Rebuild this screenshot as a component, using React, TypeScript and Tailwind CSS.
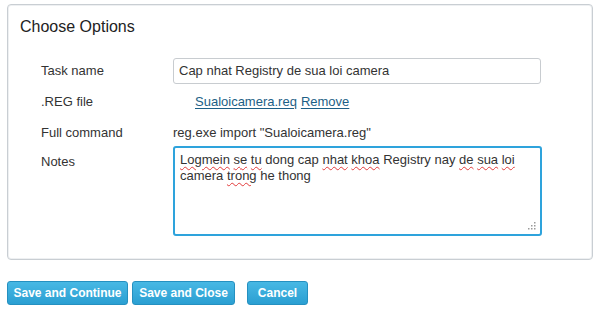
import React from "react";

const squiggle = "underline decoration-wavy decoration-[#e23b3b] decoration-1 underline-offset-2";

export default function App() {
  const notes: [string, boolean][] = [
    ["Logmein", true], [" ", false], ["se", true], [" ", false], ["tu", true],
    [" dong cap ", false], ["nhat", true], [" ", false], ["khoa", true],
    [" Registry nay ", false], ["de", true], [" ", false], ["sua", true], [" ", false], ["loi", true],
    [" camera ", false], ["trong", true], [" he thong", false],
  ];

  return (
    <div className="w-[600px] h-[318px] bg-white pt-[4px] px-[7px] font-['Liberation_Sans',Arial,sans-serif] text-[13px] text-[#333]">
      <div className="h-[256px] border border-[#c9ced3] rounded-[4px] shadow-[inset_0_0_0_1px_#eef0f2] pl-[12px] pr-[12px] pt-[12px]">
        <div className="text-[16px] text-[#222] leading-[20px]">Choose Options</div>

        <div className="mt-[21px] pl-[21px] flex flex-col">
          <div className="flex items-center h-[26px]">
            <div className="w-[132px]">Task name</div>
            <div className="w-[368px] h-[26px] border border-[#c8ccd0] rounded-[3px] flex items-center px-[5px]">
              Cap nhat Registry de sua loi camera
            </div>
          </div>

          <div className="flex items-center h-[19px] mt-[8px]">
            <div className="w-[132px]">.REG file</div>
            <div className="pl-[22px] flex gap-[4px] text-[#1d5f86] underline underline-offset-2">
              <span>Sualoicamera.req</span>
              <span>Remove</span>
            </div>
          </div>

          <div className="flex items-center h-[19px] mt-[12px]">
            <div className="w-[132px]">Full command</div>
            <div>reg.exe import "Sualoicamera.reg"</div>
          </div>

          <div className="flex items-start mt-[4px]">
            <div className="w-[132px] pt-[6px]">Notes</div>
            <div className="relative w-[369px] h-[90px] border-2 border-[#2ea3dc] rounded-[3px] px-[5px] pt-[4px] leading-[16px]">
              <div className="w-[340px]">
                {notes.map(([t, u], i) =>
                  u ? <span key={i} className={squiggle}>{t}</span> : <span key={i}>{t}</span>
                )}
              </div>
              <svg className="absolute right-[4px] bottom-[4px]" width="9" height="9" viewBox="0 0 9 9">
                <g fill="#9a9a9a">
                  <rect x="7" y="1" width="1.5" height="1.5" />
                  <rect x="4" y="4" width="1.5" height="1.5" />
                  <rect x="7" y="4" width="1.5" height="1.5" />
                  <rect x="1" y="7" width="1.5" height="1.5" />
                  <rect x="4" y="7" width="1.5" height="1.5" />
                  <rect x="7" y="7" width="1.5" height="1.5" />
                </g>
              </svg>
            </div>
          </div>
        </div>
      </div>

      <div className="mt-[21px] flex items-center text-[12px] font-bold text-white">
        <button className="h-[24px] w-[121px] rounded-[3px] border border-[#2590c0] bg-gradient-to-b from-[#47b8e4] to-[#2a9fd2]">
          Save and Continue
        </button>
        <button className="ml-[4px] h-[24px] w-[103px] rounded-[3px] border border-[#2590c0] bg-gradient-to-b from-[#47b8e4] to-[#2a9fd2]">
          Save and Close
        </button>
        <button className="ml-[12px] h-[24px] w-[61px] rounded-[3px] border border-[#2590c0] bg-gradient-to-b from-[#47b8e4] to-[#2a9fd2]">
          Cancel
        </button>
      </div>
    </div>
  );
}
